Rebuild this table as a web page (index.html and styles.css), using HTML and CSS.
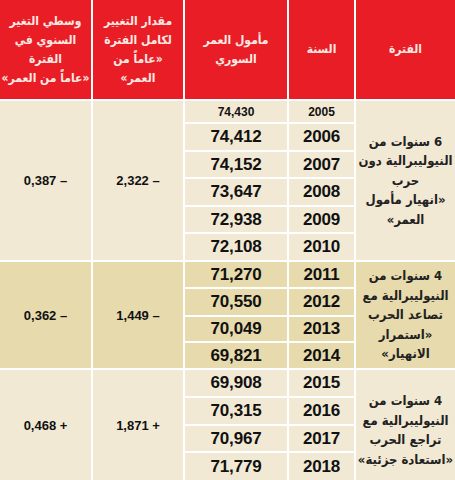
FILE: index.html
```html
<!DOCTYPE html>
<html lang="ar" dir="rtl">
<head>
  <meta charset="utf-8">
  <title>مأمول العمر في سوريا</title>
  <link rel="stylesheet" href="styles.css">
</head>
<body>
  <div class="life-table">
    <!-- header row -->
    <div class="cell head">الفترة</div>
    <div class="cell head">السنة</div>
    <div class="cell head">مأمول العمر<br>السوري</div>
    <div class="cell head">مقدار التغيير<br>لكامل الفترة<br>«عاماً من<br>العمر»</div>
    <div class="cell head">وسطي التغير<br>السنوي في<br>الفترة<br>«عاماً من العمر»</div>

    <!-- 2005 - 2010 -->
    <div class="cell period light span-6">6 سنوات من<br>النيوليبرالية دون<br>حرب<br>«انهيار مأمول<br>العمر»</div>
    <div class="cell year small light">2005</div>
    <div class="cell life small light">74,430</div>
    <div class="cell change light span-6">2,322 –</div>
    <div class="cell change light span-6">0,387 –</div>

    <div class="cell year light">2006</div>
    <div class="cell life light">74,412</div>
    <div class="cell year light">2007</div>
    <div class="cell life light">74,152</div>
    <div class="cell year light">2008</div>
    <div class="cell life light">73,647</div>
    <div class="cell year light">2009</div>
    <div class="cell life light">72,938</div>
    <div class="cell year light">2010</div>
    <div class="cell life light">72,108</div>

    <!-- 2011 - 2014 -->
    <div class="cell period dark span-4">4 سنوات من<br>النيوليبرالية مع<br>تصاعد الحرب<br>«استمرار<br>الانهيار»</div>
    <div class="cell year dark">2011</div>
    <div class="cell life dark">71,270</div>
    <div class="cell change dark span-4">1,449 –</div>
    <div class="cell change dark span-4">0,362 –</div>

    <div class="cell year dark">2012</div>
    <div class="cell life dark">70,550</div>
    <div class="cell year dark">2013</div>
    <div class="cell life dark">70,049</div>
    <div class="cell year dark">2014</div>
    <div class="cell life dark">69,821</div>

    <!-- 2015 - 2018 -->
    <div class="cell period light span-4 last">4 سنوات من<br>النيوليبرالية مع<br>تراجع الحرب<br>«استعادة جزئية»</div>
    <div class="cell year light">2015</div>
    <div class="cell life light">69,908</div>
    <div class="cell change light span-4">1,871 +</div>
    <div class="cell change light span-4">0,468 +</div>

    <div class="cell year light">2016</div>
    <div class="cell life light">70,315</div>
    <div class="cell year light">2017</div>
    <div class="cell life light">70,967</div>
    <div class="cell year light">2018</div>
    <div class="cell life light">71,779</div>
  </div>
</body>
</html>
```

FILE: styles.css
```css
html, body {
  margin: 0;
  padding: 0;
}

body {
  width: 455px;
  height: 480px;
  overflow: hidden;
  background: #fff;
  font-family: "DejaVu Sans Condensed", "DejaVu Sans", sans-serif;
}

.life-table {
  display: grid;
  grid-template-columns: 99px 65px 102px 90px 1fr;
  grid-template-rows: 99px 21px 26px 25px 26px 25px 26px 25px 26px 24px 25px 26px 26px 25px 27px;
  gap: 2px;
  background: #fff;
}

.cell {
  display: flex;
  align-items: center;
  justify-content: center;
  text-align: center;
  white-space: nowrap;
  color: #1a1a1a;
}

.head {
  background: #e91d25;
  color: #fde9e4;
  font-size: 12px;
  font-weight: bold;
  line-height: 19px;
}

.light {
  background: #f2e9d4;
}

.dark {
  background: #e7dbad;
}

.span-6 {
  grid-row: span 6;
}

.span-4 {
  grid-row: span 4;
}

.period {
  font-size: 13px;
  font-weight: bold;
  line-height: 19.5px;
  color: #222;
}

.period.last {
  padding-top: 10px;
}

.year,
.life {
  direction: ltr;
  font-family: "Liberation Sans", sans-serif;
  font-size: 17px;
  font-weight: bold;
  letter-spacing: -0.2px;
  color: #111;
}

.year.small,
.life.small {
  font-size: 12px;
  letter-spacing: 0;
}

.change {
  direction: ltr;
  font-family: "Liberation Sans", sans-serif;
  font-size: 13px;
  font-weight: bold;
  color: #111;
}
```
